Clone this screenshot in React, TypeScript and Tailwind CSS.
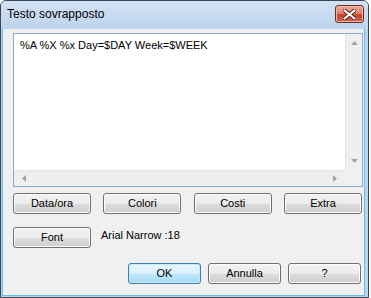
import React from "react";

const font = { fontFamily: '"Liberation Sans", Arial, sans-serif' };

function Btn({ label, w = "w-[78px]", def = false }: { label: string; w?: string; def?: boolean }) {
  return (
    <button
      className={`${w} h-[21px] rounded-[3px] border text-[11px] text-black leading-none flex items-center justify-center ${
        def
          ? "border-[#3c7fb1] bg-[linear-gradient(#eaf6fd_0%,#d9f0fc_50%,#bee6fd_51%,#a7d9f5_100%)] shadow-[inset_0_0_0_1px_#c6eafd]"
          : "border-[#707070] bg-[linear-gradient(#f2f2f2_0%,#ebebeb_50%,#dddddd_51%,#cfcfcf_100%)] shadow-[inset_0_0_0_1px_#fcfcfc]"
      }`}
    >
      {label}
    </button>
  );
}

function Arrow({ dir }: { dir: "up" | "down" | "left" | "right" }) {
  const pts = {
    up: "0,4 7,4 3.5,0",
    down: "0,0 7,0 3.5,4",
    left: "4,0 4,7 0,3.5",
    right: "0,0 0,7 4,3.5",
  }[dir];
  const vert = dir === "up" || dir === "down";
  return (
    <svg width={vert ? 7 : 4} height={vert ? 4 : 7} viewBox={vert ? "0 0 7 4" : "0 0 4 7"}>
      <polygon points={pts} fill="#a3a3a3" />
    </svg>
  );
}

function CloseButton() {
  return (
    <div className="w-[29px] h-[18px] rounded-[3px] border border-[#6e2b22] bg-[linear-gradient(#e9a99a_0%,#dc8571_45%,#c5442b_55%,#d4654c_100%)] shadow-[inset_0_0_0_1px_#eeb9ac] flex items-center justify-center">
      <svg width="13" height="11" viewBox="0 0 13 11">
        <path
          d="M1.5 1.5 L11.5 9.5 M11.5 1.5 L1.5 9.5"
          stroke="#5a2018"
          strokeWidth="4"
          strokeLinecap="round"
        />
        <path
          d="M1.5 1.5 L11.5 9.5 M11.5 1.5 L1.5 9.5"
          stroke="#ffffff"
          strokeWidth="2.2"
          strokeLinecap="round"
        />
      </svg>
    </div>
  );
}

export default function App() {
  return (
    <div className="w-[371px] h-[298px] bg-white" style={font}>
      <div className="w-[369px] h-[298px] border border-[#3a4656] rounded-t-[6px] bg-[#bcd4ee] flex flex-col overflow-hidden">
        {/* Title bar */}
        <div className="h-[28px] shrink-0 flex items-start justify-between pl-[6px] pr-[4px] bg-[linear-gradient(#d2e2f4,#bcd3ec)]">
          <span className="mt-[6px] text-[12px] text-black leading-[14px]">Testo sovrapposto</span>
          <div className="mt-[4px]">
            <CloseButton />
          </div>
        </div>

        {/* Client */}
        <div className="flex-1 flex ml-[1px] mr-[3px] mb-[1px] border-l-[1px] border-r-[1px] border-b-[1px] border-[#5cc0ec]">
          <div className="flex-1 bg-[#f0f0f0] flex flex-col pl-[10px] pr-[1px] pt-[4px]">
            {/* Edit box */}
            <div className="h-[154px] border border-[#84acd6] bg-white flex flex-col">
              <div className="flex-1 flex min-h-0">
                <div className="flex-1 pl-[6px] pt-[5px] text-[11px] leading-[13px] text-black">
                  %A %X %x Day=$DAY Week=$WEEK
                </div>
                <div className="w-[17px] bg-[#efefef] border-l border-[#e4e4e4] flex flex-col items-center justify-between py-[7px]">
                  <Arrow dir="up" />
                  <Arrow dir="down" />
                </div>
              </div>
              <div className="h-[16px] flex">
                <div className="flex-1 bg-[#efefef] border-t border-[#e4e4e4] flex items-center justify-between px-[8px]">
                  <Arrow dir="left" />
                  <Arrow dir="right" />
                </div>
                <div className="w-[17px] bg-[#f0f0f0]" />
              </div>
            </div>

            {/* Row 1 */}
            <div className="mt-[6px] flex justify-between pr-[1px]">
              <Btn label="Data/ora" />
              <Btn label="Colori" />
              <Btn label="Costi" />
              <Btn label="Extra" />
            </div>

            {/* Row 2 */}
            <div className="mt-[13px] flex items-start gap-[10px]">
              <Btn label="Font" />
              <span className="mt-[2px] text-[11px] leading-[13px] text-black">Arial Narrow :18</span>
            </div>

            {/* Row 3 */}
            <div className="mt-[15px] flex justify-end gap-[7px] pr-[2px]">
              <Btn label="OK" w="w-[73px]" def />
              <Btn label="Annulla" w="w-[73px]" />
              <Btn label="?" w="w-[73px]" />
            </div>
          </div>
        </div>
      </div>
    </div>
  );
}
